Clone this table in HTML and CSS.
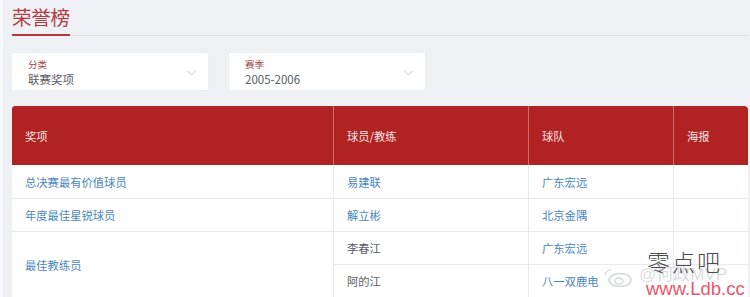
FILE: index.html
```html
<!DOCTYPE html>
<html lang="zh">
<head>
<meta charset="utf-8">
<title>荣誉榜</title>
<link rel="stylesheet" href="styles.css">
</head>
<body>
<div class="page">
  <div class="titlebar">
    <h1 class="title">荣誉榜</h1>
  </div>
  <div class="filters">
    <div class="select">
      <div class="select-text">
        <div class="select-label">分类</div>
        <div class="select-value">联赛奖项</div>
      </div>
      <svg class="chev" width="9" height="6" viewBox="0 0 9 6"><path d="M0.5 0.8 L4.5 5 L8.5 0.8" fill="none" stroke="#c4c6ca" stroke-width="1"/></svg>
    </div>
    <div class="select">
      <div class="select-text">
        <div class="select-label">赛季</div>
        <div class="select-value">2005-2006</div>
      </div>
      <svg class="chev" width="9" height="6" viewBox="0 0 9 6"><path d="M0.5 0.8 L4.5 5 L8.5 0.8" fill="none" stroke="#c4c6ca" stroke-width="1"/></svg>
    </div>
  </div>
  <table class="honors">
    <colgroup>
      <col class="c1"><col class="c2"><col class="c3"><col class="c4">
    </colgroup>
    <thead>
      <tr><th>奖项</th><th>球员/教练</th><th>球队</th><th>海报</th></tr>
    </thead>
    <tbody>
      <tr><td><a class="link">总决赛最有价值球员</a></td><td><a class="link">易建联</a></td><td><a class="link">广东宏远</a></td><td></td></tr>
      <tr><td><a class="link">年度最佳星锐球员</a></td><td><a class="link">解立彬</a></td><td><a class="link">北京金隅</a></td><td></td></tr>
      <tr><td rowspan="2"><a class="link">最佳教练员</a></td><td class="plain">李春江</td><td><a class="link">广东宏远</a></td><td></td></tr>
      <tr><td class="plain sub">阿的江</td><td><a class="link">八一双鹿电</a></td><td></td></tr>
    </tbody>
  </table>
</div>
<div class="mark">
  <svg class="mark-logo" width="30" height="18" viewBox="0 0 30 18"><ellipse cx="17" cy="11" rx="11" ry="6.5" fill="none" stroke="rgba(160,164,170,0.45)" stroke-width="1.6"/><ellipse cx="16" cy="12" rx="4" ry="3" fill="none" stroke="rgba(160,164,170,0.45)" stroke-width="1.4"/><path d="M2 6 A6 6 0 0 1 8 1" fill="none" stroke="rgba(160,164,170,0.4)" stroke-width="1.4"/></svg>
  <div class="mark-weibo">@何政MVP</div>
  <div class="mark-cn">零点吧</div>
  <div class="mark-url">www.Ldb.cc</div>
</div>
</body>
</html>
```
FILE: styles.css
```css
html, body {
  margin: 0;
  padding: 0;
  height: 297px;
  overflow: hidden;
}
body {
  background: #eef0f3;
  font-family: "Noto Sans CJK SC", "Noto Sans", sans-serif;
  border-left: 3px solid #f7f8fa;
  box-sizing: border-box;
  position: relative;
}
.page {
  padding: 0 2px 0 9px;
}
.titlebar {
  height: 36px;
  border-bottom: 1px solid #e2e4e8;
  box-sizing: border-box;
  display: flex;
  align-items: flex-end;
}
.title {
  margin: 0;
  font-size: 19.5px;
  font-weight: 400;
  line-height: 24px;
  color: #b23a42;
  padding-bottom: 5px;
  border-bottom: 2px solid #b23a42;
  margin-bottom: -1px;
  letter-spacing: -0.3px;
}
.filters {
  display: flex;
  gap: 21px;
  margin-top: 17px;
}
.select {
  width: 196px;
  height: 37px;
  background: #ffffff;
  border-radius: 2px;
  box-shadow: 0 0 1px rgba(0,0,0,0.06);
  display: flex;
  align-items: center;
  justify-content: space-between;
  padding: 0 12px 0 16px;
  box-sizing: border-box;
}
.select-text {
  display: flex;
  flex-direction: column;
  gap: 1px;
  padding-top: 1px;
}
.select-label {
  font-size: 9.5px;
  line-height: 14px;
  color: #a0454c;
}
.select-value {
  font-size: 11.5px;
  line-height: 15px;
  color: #5a5d62;
}
.chev {
  margin-top: 2px;
}
.honors {
  margin-top: 16px;
  width: 736px;
  border-collapse: separate;
  border-spacing: 0;
  table-layout: fixed;
  background: #ffffff;
  font-size: 11.3px;
}
.c1 { width: 321px; }
.c2 { width: 195px; }
.c3 { width: 145px; }
.c4 { width: 75px; }
.honors th {
  background: #b12323;
  color: #f6e2e2;
  font-weight: 400;
  text-align: left;
  height: 59px;
  padding: 0 0 0 13px;
  border-left: 1px solid #d46a6a;
  box-sizing: border-box;
}
.honors th:first-child {
  border-left: none;
  border-top-left-radius: 3px;
}
.honors th:last-child {
  border-top-right-radius: 4px;
}
.honors td {
  height: 33px;
  padding: 0 0 0 13px;
  border-top: 1px solid #e7e9ec;
  border-left: 1px solid #e7e9ec;
  box-sizing: border-box;
  color: #5a5d62;
}
.honors tbody tr:first-child td {
  border-top: none;
}
.honors td:first-child {
  border-left: none;
}
.honors td.sub {
  border-left: 1px solid #e7e9ec;
}
.honors .link {
  color: #4a86be;
  text-decoration: none;
}
.honors td.plain {
  color: #5a5d62;
}
.mark {
  position: absolute;
  left: 596px;
  top: 246px;
  width: 154px;
  height: 51px;
  pointer-events: none;
}
.mark-logo {
  position: absolute;
  left: 4px;
  top: 23px;
}
.mark-weibo {
  position: absolute;
  left: 40px;
  top: 19px;
  font-family: "Liberation Sans", "Noto Sans CJK SC", sans-serif;
  font-size: 17px;
  line-height: 20px;
  color: rgba(170,174,180,0.45);
  white-space: nowrap;
}
.mark-cn {
  position: absolute;
  left: 48px;
  top: 2px;
  font-family: "Noto Sans CJK SC", sans-serif;
  font-weight: 300;
  font-size: 23px;
  line-height: 26px;
  letter-spacing: 2px;
  color: #4c4c4c;
}
.mark-url {
  position: absolute;
  left: 47px;
  top: 33px;
  font-family: "Liberation Sans", sans-serif;
  font-size: 18.5px;
  line-height: 20px;
  color: #e9566a;
}
```
